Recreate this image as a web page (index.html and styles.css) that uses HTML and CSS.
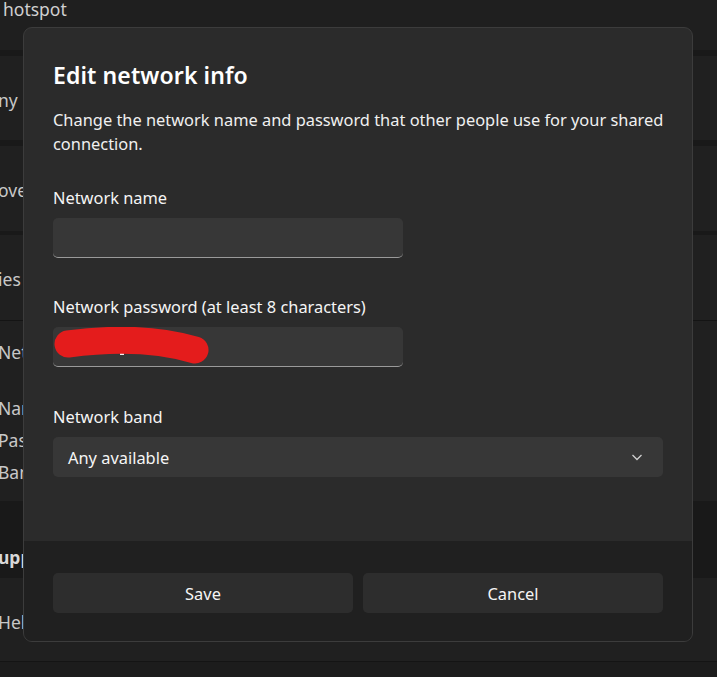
FILE: index.html
```html
<!DOCTYPE html>
<html lang="en">
<head>
<meta charset="utf-8">
<title>Edit network info</title>
<link rel="stylesheet" href="styles.css">
</head>
<body>
<div class="page">
  <div class="header"><span class="crumb">hotspot</span></div>
  <div class="gap gap-6"></div>
  <div class="card card-84"><span class="bg-text">ny in</span></div>
  <div class="gap gap-6"></div>
  <div class="card card-85"><span class="bg-text">over</span></div>
  <div class="gap gap-4"></div>
  <div class="card card-85"><span class="bg-text">ies</span></div>
  <div class="line"></div>
  <div class="card expanded">
    <span class="bg-text">Net</span>
    <div class="props">
      <span class="bg-text">Nar</span>
      <span class="bg-text">Pas</span>
      <span class="bg-text">Ban</span>
    </div>
  </div>
  <div class="section"><span class="bg-text bold">upp</span></div>
  <div class="card card-83"><span class="bg-text">Hel</span></div>
  <div class="line"></div>
  <div class="rest"></div>
</div>

<div class="dialog">
  <div class="dialog-body">
    <h1 class="title">Edit network info</h1>
    <p class="desc">Change the network name and password that other people use for your shared connection.</p>

    <label class="label">Network name</label>
    <div class="field"></div>

    <label class="label">Network password (at least 8 characters)</label>
    <div class="field password">
      <svg class="scribble" width="160" height="40" viewBox="0 0 160 40">
        <rect x="67" y="26" width="4" height="2" fill="#f2f2f2"/>
        <path d="M15 17 C45 13 95 9 142 23" fill="none" stroke="#e41c1c" stroke-width="27" stroke-linecap="round"/>
      </svg>
    </div>

    <label class="label band-label">Network band</label>
    <div class="combo">
      <span class="combo-text">Any available</span>
      <svg class="chevron" width="12" height="12" viewBox="0 0 12 12">
        <path d="M1.5 4 L6 8.5 L10.5 4" fill="none" stroke="#cfcfcf" stroke-width="1.3"/>
      </svg>
    </div>
  </div>
  <div class="dialog-footer">
    <button class="btn">Save</button>
    <button class="btn">Cancel</button>
  </div>
</div>
</body>
</html>
```

FILE: styles.css
```css
* { box-sizing: border-box; }
html, body {
  margin: 0;
  padding: 0;
  width: 717px;
  height: 677px;
  overflow: hidden;
  background: #1c1c1c;
  font-family: "Noto Sans", "Open Sans", sans-serif;
}

.page {
  display: flex;
  flex-direction: column;
  width: 717px;
  height: 677px;
  color: #c8c8c8;
  font-size: 17.5px;
}
.header {
  height: 50px;
  background: #1f1f1f;
  padding-left: 3px;
}
.crumb {
  display: block;
  line-height: 20px;
  margin-top: -1px;
  color: #d0d0d0;
}
.gap { background: #191919; }
.gap-6 { height: 6px; }
.gap-4 { height: 4px; }
.line { height: 1px; background: #141414; }
.card {
  background: #202020;
  display: flex;
  align-items: center;
  padding-top: 3px;
}
.card-84 { height: 84px; }
.card-85 { height: 85px; }
.card-83 { height: 83px; padding-top: 4px; }
.bg-text {
  margin-left: -2px;
  line-height: 24px;
  white-space: nowrap;
}
.bold { font-weight: 700; color: #d8d8d8; }
.expanded {
  height: 180px;
  flex-direction: column;
  align-items: flex-start;
  padding-top: 19px;
}
.props {
  display: flex;
  flex-direction: column;
  margin-top: 32px;
  gap: 8px;
}
.section {
  height: 77px;
  background: #191919;
  display: flex;
  align-items: flex-end;
  padding-bottom: 9px;
}
.rest { flex: 1; background: #1c1c1c; }

/* dialog */
.dialog {
  position: absolute;
  left: 23px;
  top: 27px;
  width: 670px;
  height: 615px;
  background: #2b2b2b;
  border: 1px solid #3c3c3c;
  border-radius: 9px;
  overflow: hidden;
  display: flex;
  flex-direction: column;
  color: #ffffff;
}
.dialog-body {
  flex: 1;
  padding: 29px 29px 0 29px;
  display: flex;
  flex-direction: column;
  align-items: flex-start;
}
.title {
  margin: 0;
  font-size: 23px;
  font-weight: 600;
  line-height: 36px;
  letter-spacing: 0.1px;
}
.desc {
  margin: 15px 0 0 0;
  font-size: 16.4px;
  line-height: 24px;
  color: #f0f0f0;
  width: 614px;
}
.label {
  margin-top: 29px;
  font-size: 16.4px;
  line-height: 24px;
  color: #f5f5f5;
}
.desc + .label { margin-top: 30px; }
.field {
  margin-top: 8px;
  width: 350px;
  height: 40px;
  background: #373737;
  border-radius: 5px;
  border-bottom: 1px solid #9a9a9a;
  position: relative;
}
.field + .label { margin-top: 37px; }
.field + .band-label { margin-top: 38px; }
.scribble {
  position: absolute;
  left: 0;
  top: 0;
}
.combo {
  margin-top: 8px;
  width: 610px;
  height: 40px;
  background: #373737;
  border-radius: 5px;
  display: flex;
  align-items: center;
  justify-content: space-between;
  padding: 0 20px 0 15px;
}
.combo-text {
  font-size: 16.4px;
  color: #f5f5f5;
}
.chevron { display: block; }

.dialog-footer {
  height: 100px;
  background: #202020;
  display: flex;
  gap: 10px;
  padding: 32px 29px 0 29px;
}
.btn {
  width: 300px;
  height: 40px;
  background: #2d2d2d;
  border: none;
  border-radius: 5px;
  color: #f5f5f5;
  font-family: "Noto Sans", "Open Sans", sans-serif;
  font-size: 16.4px;
}
```
